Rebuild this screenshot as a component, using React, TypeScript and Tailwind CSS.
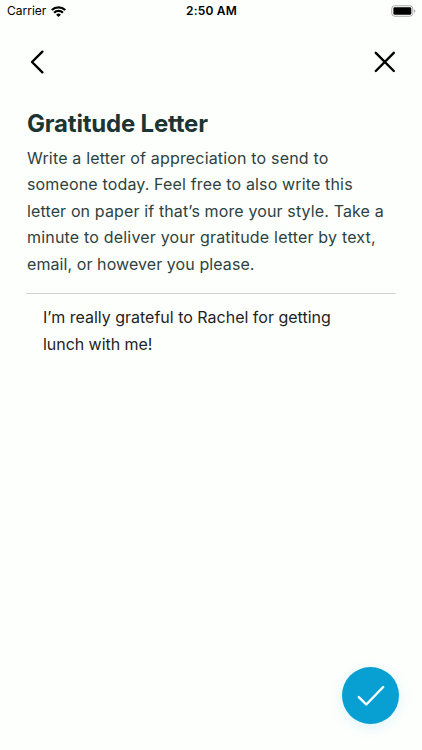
type IconButtonProps = {
  label: string;
  children: React.ReactNode;
};

function StatusBar() {
  return (
    <div className="grid h-[22px] grid-cols-3 items-center pr-1.5 pl-[7px] text-black">
      <div className="flex items-center gap-[5px]">
        <span className="text-[12px] leading-none">Carrier</span>
        <svg width="15" height="11" viewBox="0 0 15 11" fill="none" stroke="currentColor" strokeWidth="2.3">
          <path d="M0.8 4a9.6 9.6 0 0 1 13.4 0" />
          <path d="M3.1 6.8a6.2 6.2 0 0 1 8.8 0" />
          <path d="M7.5 11 5.1 8.8a3.4 3.4 0 0 1 4.8 0Z" fill="currentColor" stroke="none" />
        </svg>
      </div>
      <span className="text-center text-[12px] leading-none font-semibold tracking-[0.2px]">
        2:50 AM
      </span>
      <svg className="justify-self-end" width="25" height="12" viewBox="0 0 25 12">
        <rect x="0.75" y="0.75" width="21" height="10.5" rx="3" fill="white" stroke="#a9a9a9" />
        <rect x="2.4" y="2.2" width="17.9" height="7.6" rx="1.4" fill="black" />
        <path d="M23.1 4.2v3.6c1.6-.5 1.6-3.1 0-3.6Z" fill="#a0a0a0" />
      </svg>
    </div>
  );
}

function IconButton({ label, children }: IconButtonProps) {
  return (
    <button type="button" aria-label={label} className="flex size-6 items-center justify-center text-black">
      {children}
    </button>
  );
}

export default function App() {
  return (
    <main className="flex h-[750px] w-[422px] flex-col bg-[#fdfffd] font-['Inter',sans-serif]">
      <StatusBar />
      <header className="mt-7 flex items-center justify-between px-[25px]">
        <IconButton label="Back">
          <svg width="24" height="24" viewBox="0 0 24 24" fill="none" stroke="currentColor" strokeWidth="2.4" strokeLinecap="round" strokeLinejoin="round">
            <path d="M17.4 1.7 7 12l10.4 10.3" />
          </svg>
        </IconButton>
        <IconButton label="Close">
          <svg width="24" height="24" viewBox="0 0 24 24" fill="none" stroke="currentColor" strokeWidth="2.4" strokeLinecap="round">
            <path d="m2.8 2.8 18 18.2M20.8 2.8 2.8 21" />
          </svg>
        </IconButton>
      </header>
      <section className="mt-[35px] px-[26px]">
        <h1 className="pl-px text-[24px] leading-[30px] font-bold tracking-[-0.2px] text-[#1c3432]">
          Gratitude Letter
        </h1>
        <p className="mt-[5.5px] pl-px text-[16px] leading-[26.5px] whitespace-nowrap text-[#2d4240]">
          <span className="block tracking-[0.17px]">Write a letter of appreciation to send to</span>
          <span className="block tracking-[0.15px]">someone today. Feel free to also write this</span>
          <span className="block tracking-[0.13px]">letter on paper if that’s more your style. Take a</span>
          <span className="block tracking-[0.19px]">minute to deliver your gratitude letter by text,</span>
          <span className="block tracking-[0.08px]">email, or however you please.</span>
        </p>
        <hr className="mt-4 border-t border-[#d2d4d3]" />
        <p className="mt-2.5 pl-[17px] text-[16px] leading-[26.5px] whitespace-nowrap text-[#1f2323]">
          <span className="block">I’m really grateful to Rachel for getting</span>
          <span className="block tracking-[-0.05px]">lunch with me!</span>
        </p>
      </section>
      <button
        type="button"
        aria-label="Done"
        className="mt-auto mr-[23px] mb-[26px] flex size-[57px] items-center justify-center self-end rounded-full bg-[#089fd3] shadow-[0_3px_14px_rgba(8,159,211,0.13)]"
      >
        <svg width="28" height="22" viewBox="0 0 28 22" fill="none" stroke="white" strokeWidth="2.4" strokeLinecap="round" strokeLinejoin="round">
          <path d="m1.8 12.1 7.5 7.4L26.2 2" />
        </svg>
      </button>
    </main>
  );
}
